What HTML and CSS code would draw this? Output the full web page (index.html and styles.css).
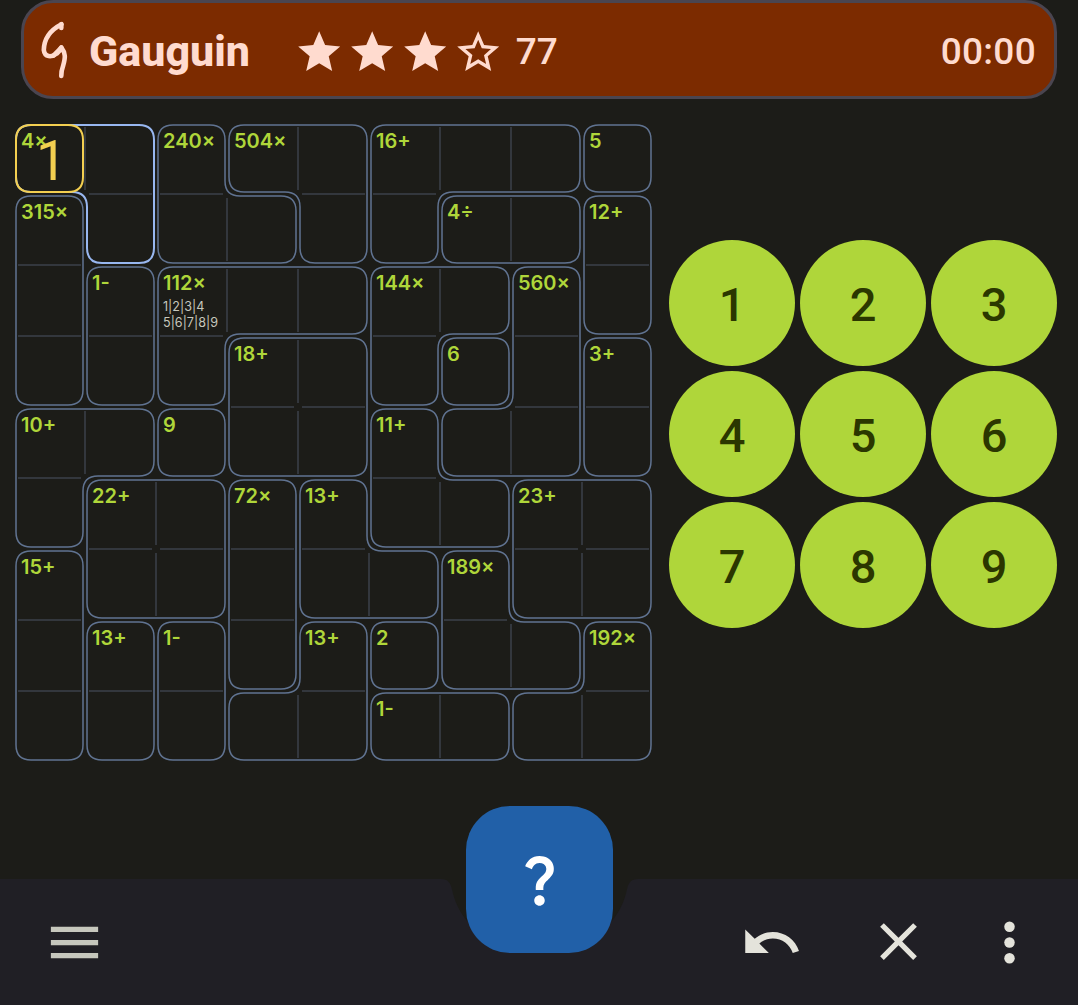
FILE: index.html
```html
<!DOCTYPE html>
<html lang="en">
<head>
  <meta charset="utf-8">
  <title>Gauguin</title>
  <link rel="stylesheet" href="styles.css">
</head>
<body>
  <header class="topbar">
    <svg class="logo" viewBox="0 0 30 60" aria-hidden="true">
      <path d="M22.500 4.200C10.500 10.500 5 19.500 4.800 30C5.600 37.500 12.500 37.500 18 33.500Q21 31 22.300 27.500C27 33.500 26.300 38 24.200 45.500Q22 51.500 22.300 56"/>
      <path d="M22.300 4.200V8M22.300 27.500C18.500 32 16.500 33.500 14.500 35.500"/>
    </svg>
    <h1 class="title">Gauguin</h1>
    <div class="rating">
      <svg class="star" viewBox="0 0 24 24"><path d="M12 17.270 18.180 21l-1.640-7.030L22 9.240l-7.190-.61L12 2 9.190 8.630 2 9.240l5.460 4.730L5.820 21z"/></svg>
      <svg class="star" viewBox="0 0 24 24"><path d="M12 17.270 18.180 21l-1.640-7.030L22 9.240l-7.190-.61L12 2 9.190 8.630 2 9.240l5.460 4.730L5.820 21z"/></svg>
      <svg class="star" viewBox="0 0 24 24"><path d="M12 17.270 18.180 21l-1.640-7.030L22 9.240l-7.190-.61L12 2 9.190 8.630 2 9.240l5.460 4.730L5.820 21z"/></svg>
      <svg class="star" viewBox="0 0 24 24"><path d="M22 9.240l-7.190-.62L12 2 9.190 8.630 2 9.240l5.460 4.730L5.820 21 12 17.270 18.180 21l-1.630-7.030L22 9.240zM12 15.400l-3.760 2.270 1-4.280-3.320-2.880 4.380-.38L12 6.100l1.710 4.040 4.380.38-3.320 2.880 1 4.280L12 15.400z"/></svg>
    </div>
    <span class="difficulty">77</span>
    <span class="timer">00:00</span>
  </header>

  <main class="game">
    <section class="board" id="board">
      <svg class="lines" id="lines" viewBox="0 0 639 639"></svg>
    </section>
    <section class="keypad">
      <button class="key">1</button>
      <button class="key">2</button>
      <button class="key">3</button>
      <button class="key">4</button>
      <button class="key">5</button>
      <button class="key">6</button>
      <button class="key">7</button>
      <button class="key">8</button>
      <button class="key">9</button>
    </section>
  </main>

  <footer class="bottombar">
    <svg class="bar-shape" viewBox="0 0 1078 126" aria-hidden="true">
      <path d="M0 0H441C448 0 450.500 3.500 452 10.500C454.500 22 459 32 467 42H612C620 32 624.500 22 627 10.500C628.500 3.500 631 0 638 0H1078V126H0Z"/>
    </svg>
    <svg class="icon menu" viewBox="0 0 24 24"><path d="M3 18h18v-2H3v2zm0-5h18v-2H3v2zm0-7v2h18V6H3z"/></svg>
    <svg class="icon undo" viewBox="0 0 24 24"><path d="M12.500 8c-2.650 0-5.050.99-6.900 2.600L2 7v9h9l-3.620-3.620c1.390-1.160 3.160-1.880 5.120-1.880 3.540 0 6.550 2.310 7.600 5.500l2.370-.78C21.080 11.030 17.150 8 12.500 8z"/></svg>
    <svg class="icon close" viewBox="0 0 24 24"><path d="M19 6.410 17.590 5 12 10.590 6.410 5 5 6.410 10.590 12 5 17.590 6.410 19 12 13.410 17.590 19 19 17.590 13.410 12z"/></svg>
    <svg class="icon more" viewBox="0 0 24 24"><circle cx="12" cy="6" r="2"/><circle cx="12" cy="12" r="2"/><circle cx="12" cy="18" r="2"/></svg>
    <button class="fab" aria-label="Help">
      <svg class="help" viewBox="0 0 24 24"><path d="M11.070 12.850c.77-1.390 2.250-2.210 3.110-3.440.91-1.290.4-3.700-2.180-3.700-1.690 0-2.520 1.280-2.870 2.340L6.540 6.960C7.250 4.830 9.180 3 11.990 3c2.350 0 3.960 1.070 4.780 2.410.7 1.150 1.110 3.300.03 4.900-1.200 1.770-2.350 2.310-2.970 3.450-.25.46-.35.76-.35 2.240h-2.890c-.01-.78-.13-2.050.48-3.150zM14 20c0 1.100-.9 2-2 2s-2-.9-2-2 .9-2 2-2 2 .9 2 2z"/></svg>
    </button>
  </footer>
  <script src="board.js"></script>
</body>
</html>
```

FILE: styles.css
```css
* {
  box-sizing: border-box;
}

body {
  margin: 0;
  width: 1078px;
  height: 1005px;
  display: flex;
  flex-direction: column;
  overflow: hidden;
  background: #1c1c18;
  font-family: Roboto, "Liberation Sans", sans-serif;
}

button {
  border: 0;
  padding: 0;
  font: inherit;
}

.topbar {
  height: 99px;
  margin: 0 21px;
  padding: 0 18px 0 15px;
  display: flex;
  align-items: center;
  border: 3px solid #4a4550;
  border-radius: 32px;
  background: #7c2b00;
  color: #ffdbcf;
  font-size: 37px;
  font-weight: 500;
}

.logo {
  width: 30px;
  height: 60px;
  margin-right: 20px;
  fill: none;
  stroke: #ffdbcf;
  stroke-width: 4.600;
  stroke-linecap: round;
  stroke-linejoin: round;
}

.title {
  width: 160px;
  margin: 0;
  padding-top: 3px;
  font-size: 43px;
  font-weight: 800;
  white-space: nowrap;
}

.rating {
  display: flex;
  gap: 2.600px;
  margin-left: 45px;
  padding-top: 5px;
}

.star {
  width: 50.400px;
  height: 50.400px;
  fill: #ffdbcf;
}

.difficulty {
  margin-left: 12.500px;
  padding-top: 3px;
}

.timer {
  margin-left: auto;
  padding-top: 3px;
  letter-spacing: 0.300px;
}

.game {
  height: 780px;
  padding: 24px 21px 0 14px;
  display: flex;
  gap: 16px;
}

.board {
  position: relative;
  width: 639px;
  height: 639px;
  display: grid;
  grid-template-columns: repeat(9, 71px);
  grid-template-rows: repeat(9, 71px);
  font-family: Inter, "Liberation Sans", sans-serif;
}

.lines {
  position: absolute;
  inset: 0;
  width: 639px;
  height: 639px;
  fill: none;
  stroke-width: 2;
}

.grid-line {
  stroke: #33373d;
}

.cage {
  stroke: #607391;
  stroke-width: 1.500;
}

.cage-active {
  stroke: #98b7f0;
}

.cell-active {
  stroke: #f3cf50;
}

.cell {
  position: relative;
  padding: 5px 0 0 7px;
  white-space: nowrap;
}

.label {
  display: block;
  font-size: 20px;
  line-height: 26px;
  font-weight: 600;
  color: #afd63a;
}

.notes {
  display: block;
  margin-top: 3px;
  font-size: 12.600px;
  line-height: 16px;
  color: #c6c7bd;
}

.value {
  position: absolute;
  inset: 2px;
  top: 5px;
  left: 6px;
  font-family: Roboto, sans-serif;
  font-size: 55px;
  line-height: 67px;
  text-align: center;
  color: #f3cf50;
}

.keypad {
  margin-top: 117px;
  display: grid;
  grid-template-columns: repeat(3, 126px);
  grid-auto-rows: 126px;
  gap: 5px;
  align-content: start;
}

.key {
  padding-top: 2px;
  border-radius: 50%;
  background: #afd63a;
  color: #2b3700;
  font-size: 47px;
  font-weight: 500;
}

.bottombar {
  position: relative;
  height: 126px;
  padding: 0 37.500px 0 43px;
  display: flex;
  align-items: center;
}

.bar-shape {
  position: absolute;
  inset: 0;
  width: 1078px;
  height: 126px;
  fill: #201f25;
}

.icon {
  position: relative;
  width: 63px;
  height: 63px;
  fill: #e4e3db;
}

.menu {
  fill: #c6c7bd;
}

.undo {
  margin-left: auto;
}

.close {
  margin: 0 0 1px 64px;
}

.more {
  margin-left: 48px;
}

.fab {
  position: absolute;
  left: 466px;
  top: -73px;
  width: 147px;
  height: 147px;
  display: grid;
  place-items: center;
  border-radius: 44px;
  background: #2160a8;
}

.help {
  width: 63px;
  height: 63px;
  fill: #fff;
}
```

FILE: board.js
```js
// Each letter names the cage that a cell belongs to.
const cages = [
  'AABCCDDDE',
  'FABBCDGGH',
  'FIJJJKKLH',
  'FIJMMKNLO',
  'PPQMMRLLO',
  'PSSTURRVV',
  'WSSTUUXVV',
  'WYZTabXXc',
  'WYZaaddcc'
];

const labels = {
  A: '4×', B: '240×', C: '504×', D: '16+', E: '5', F: '315×', G: '4÷', H: '12+',
  I: '1-', J: '112×', K: '144×', L: '560×', M: '18+', N: '6', O: '3+', P: '10+',
  Q: '9', R: '11+', S: '22+', T: '72×', U: '13+', V: '23+', W: '15+', X: '189×',
  Y: '13+', Z: '1-', a: '13+', b: '2', c: '192×', d: '1-'
};
const notes = { J: '1|2|3|4<br>5|6|7|8|9' };
const values = { A: '1' };

const SIZE = 71;
const INSET = 2;
const RADIUS = 15;
const at = (r, c) => (cages[r] || '')[c];

// Rounded path through the given corner points.
function roundedPath(points) {
  const n = points.length;
  const step = (from, to) => {
    const len = Math.hypot(to[0] - from[0], to[1] - from[1]);
    return [from[0] + (to[0] - from[0]) / len * RADIUS, from[1] + (to[1] - from[1]) / len * RADIUS];
  };
  return points.map((p, i) =>
    `${i ? 'L' : 'M'}${step(p, points[(i + n - 1) % n])}Q${p} ${step(p, points[(i + 1) % n])}`
  ).join('') + 'Z';
}

// Walks clockwise round a cage and returns its inset corner points.
function outline(id) {
  const next = {};
  const add = (x, y, dx, dy) => { next[[x, y]] = [dx, dy]; };
  cages.forEach((row, r) => [...row].forEach((cell, c) => {
    if (cell !== id) return;
    if (at(r - 1, c) !== id) add(c, r, 1, 0);
    if (at(r, c + 1) !== id) add(c + 1, r, 0, 1);
    if (at(r + 1, c) !== id) add(c + 1, r + 1, -1, 0);
    if (at(r, c - 1) !== id) add(c, r + 1, 0, -1);
  }));
  const start = Object.keys(next)[0];
  let [x, y] = start.split(',').map(Number);
  let dir = next[start];
  const points = [];
  do {
    x += dir[0];
    y += dir[1];
    const turn = next[[x, y]];
    if (turn[0] !== dir[0] || turn[1] !== dir[1]) {
      points.push([
        x * SIZE + INSET * (-dir[1] - turn[1]),
        y * SIZE + INSET * (dir[0] + turn[0])
      ]);
    }
    dir = turn;
  } while (`${x},${y}` !== start);
  return points;
}

let lines = '';
let cells = '';
const seen = new Set();
cages.forEach((row, r) => [...row].forEach((id, c) => {
  const x = c * SIZE, y = r * SIZE;
  if (at(r, c + 1) === id) lines += `<path class="grid-line" d="M${x + SIZE} ${y + 4}v63"/>`;
  if (at(r + 1, c) === id) lines += `<path class="grid-line" d="M${x + 4} ${y + SIZE}h63"/>`;
  let content = '';
  if (!seen.has(id)) {
    content = `<span class="label">${labels[id]}</span>`;
    if (notes[id]) content += `<span class="notes">${notes[id]}</span>`;
    if (values[id]) content += `<span class="value">${values[id]}</span>`;
    seen.add(id);
  }
  cells += `<div class="cell">${content}</div>`;
}));

seen.forEach(id => { if (id !== 'A') lines += `<path class="cage" d="${roundedPath(outline(id))}"/>`; });
lines += `<path class="cage-active" d="${roundedPath(outline('A'))}"/>`;
lines += `<path class="cell-active" d="${roundedPath([[2, 2], [69, 2], [69, 69], [2, 69]])}"/>`;

document.getElementById('lines').innerHTML = lines;
document.getElementById('board').insertAdjacentHTML('beforeend', cells);
```
